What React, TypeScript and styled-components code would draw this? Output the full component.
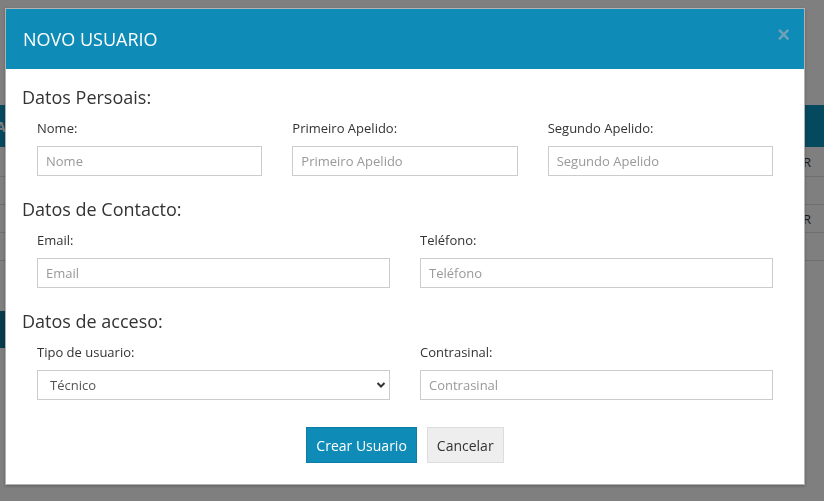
import styled, { createGlobalStyle } from "styled-components";

const GlobalStyle = createGlobalStyle`
  body {
    margin: 0;
    font-family: "Open Sans", "Liberation Sans", sans-serif;
    color: #333;
    background: #fff;
    overflow: hidden;
  }
  * { box-sizing: border-box; }
`;

/* page behind the modal */
const Page = styled.div`
  width: 824px;
  height: 501px;
  overflow: hidden;
`;

const TopArea = styled.div`
  height: 105px;
`;

const TableHead = styled.div`
  height: 42px;
  background: #0b93bd;
  color: #fff;
  font-size: 14px;
  font-weight: 700;
  display: flex;
  align-items: center;
  margin-left: -4px;
`;

const TableRow = styled.div<{ $h: number }>`
  height: ${(p) => p.$h}px;
  border-bottom: 1px solid #dedede;
  display: flex;
  align-items: center;
  justify-content: flex-end;
  padding-right: 13px;
  font-size: 13px;
`;

const PageButton = styled.div`
  margin-top: 50px;
  width: 120px;
  height: 37px;
  background: #0c7898;
  margin-left: -110px;
`;

/* modal */
const Backdrop = styled.div`
  position: fixed;
  inset: 0;
  background: rgba(0, 0, 0, 0.5);
`;

const Dialog = styled.div`
  position: fixed;
  top: 8px;
  left: 5px;
  width: 800px;
  background: #fff;
  border: 1px solid rgba(0, 0, 0, 0.3);
  box-shadow: 0 1px 3px rgba(0, 0, 0, 0.25);
`;

const Header = styled.div`
  height: 60px;
  background: #0e8bb7;
  display: flex;
  align-items: center;
  justify-content: space-between;
  padding: 0 14px 0 17px;
`;

const Title = styled.h4`
  margin: 0;
  font-size: 18px;
  font-weight: 400;
  color: #fff;
`;

const Close = styled.button`
  border: 0;
  background: none;
  padding: 0;
  font-family: "Liberation Sans", sans-serif;
  font-size: 22px;
  font-weight: 700;
  line-height: 1;
  color: #6fa2b8;
  margin-top: -8px;
  cursor: pointer;
`;

const Body = styled.div`
  padding: 18px 16px 21px;
`;

const Section = styled.div`
  & + & {
    margin-top: 23px;
  }
`;

const SectionTitle = styled.h4`
  margin: 0;
  font-size: 18px;
  line-height: 20px;
  font-weight: 400;
  color: #333;
`;

const Fields = styled.div<{ $cols: number }>`
  display: grid;
  grid-template-columns: repeat(${(p) => p.$cols}, 1fr);
  column-gap: 30px;
  padding: 0 15px;
  margin-top: 12px;
`;

const Group = styled.div`
  display: flex;
  flex-direction: column;
  position: relative;
`;

const Label = styled.label`
  font-size: 13px;
  line-height: 18px;
  margin-bottom: 9px;
  color: #333;
`;

const Input = styled.input`
  height: 30px;
  border: 1px solid #ccc;
  border-radius: 0;
  padding: 0 8px;
  font-family: inherit;
  font-size: 13px;
  color: #555;
  outline: none;
  &::placeholder {
    color: #999;
  }
`;

const Select = styled.select`
  appearance: none;
  height: 30px;
  border: 1px solid #ccc;
  border-radius: 0;
  padding: 0 12px;
  font-family: inherit;
  font-size: 13px;
  color: #555;
  background: #fff;
  outline: none;
`;

const Chevron = styled.svg`
  position: absolute;
  right: 4px;
  bottom: 11px;
  pointer-events: none;
`;

const Footer = styled.div`
  display: flex;
  justify-content: center;
  gap: 10px;
  margin-top: 27px;
`;

const Button = styled.button<{ $primary?: boolean }>`
  height: 36px;
  padding: 0 9px;
  font-family: inherit;
  font-size: 14px;
  border-radius: 0;
  border: 1px solid ${(p) => (p.$primary ? "#0c7da5" : "#ddd")};
  background: ${(p) => (p.$primary ? "#0e8bb7" : "#eee")};
  color: ${(p) => (p.$primary ? "#fff" : "#333")};
  cursor: pointer;
`;

export default function App() {
  return (
    <>
      <GlobalStyle />
      <Page>
        <TopArea />
        <TableHead>ACCIONS</TableHead>
        <TableRow $h={30}>EDITAR</TableRow>
        <TableRow $h={28} />
        <TableRow $h={28}>EDITAR</TableRow>
        <TableRow $h={28} />
        <PageButton />
      </Page>
      <Backdrop />
      <Dialog>
        <Header>
          <Title>NOVO USUARIO</Title>
          <Close aria-label="Close">×</Close>
        </Header>
        <Body>
          <Section>
            <SectionTitle>Datos Persoais:</SectionTitle>
            <Fields $cols={3}>
              <Group>
                <Label>Nome:</Label>
                <Input placeholder="Nome" />
              </Group>
              <Group>
                <Label>Primeiro Apelido:</Label>
                <Input placeholder="Primeiro Apelido" />
              </Group>
              <Group>
                <Label>Segundo Apelido:</Label>
                <Input placeholder="Segundo Apelido" />
              </Group>
            </Fields>
          </Section>
          <Section>
            <SectionTitle>Datos de Contacto:</SectionTitle>
            <Fields $cols={2}>
              <Group>
                <Label>Email:</Label>
                <Input placeholder="Email" />
              </Group>
              <Group>
                <Label>Teléfono:</Label>
                <Input placeholder="Teléfono" />
              </Group>
            </Fields>
          </Section>
          <Section>
            <SectionTitle>Datos de acceso:</SectionTitle>
            <Fields $cols={2}>
              <Group>
                <Label>Tipo de usuario:</Label>
                <Select defaultValue="tecnico">
                  <option value="tecnico">Técnico</option>
                  <option value="admin">Administrador</option>
                </Select>
                <Chevron width="10" height="8" viewBox="0 0 10 8">
                  <path d="M1.5 2 L5 5.5 L8.5 2" fill="none" stroke="#333" strokeWidth="2" />
                </Chevron>
              </Group>
              <Group>
                <Label>Contrasinal:</Label>
                <Input type="password" placeholder="Contrasinal" />
              </Group>
            </Fields>
          </Section>
          <Footer>
            <Button $primary>Crear Usuario</Button>
            <Button>Cancelar</Button>
          </Footer>
        </Body>
      </Dialog>
    </>
  );
}
